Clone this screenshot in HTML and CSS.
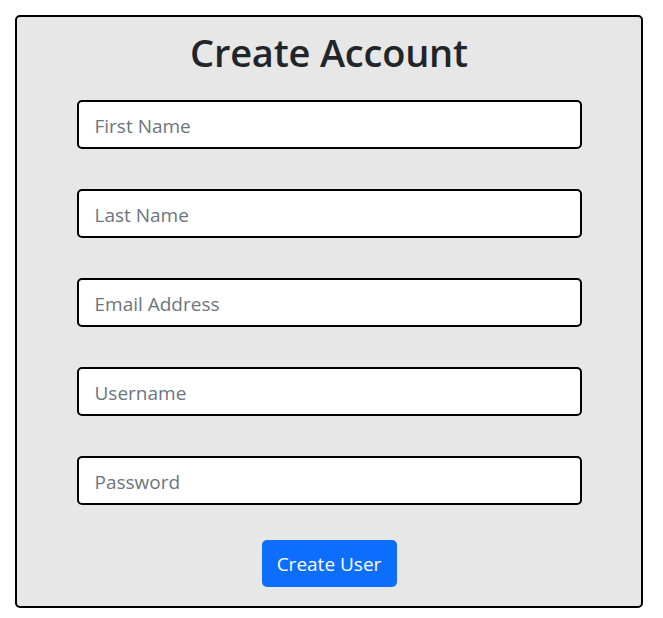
FILE: index.html
```html
<!DOCTYPE html>
<html lang="en">
<head>
<meta charset="utf-8">
<title>Create Account</title>
<link rel="stylesheet" href="styles.css">
</head>
<body>
<main class="card">
  <h1 class="title">Create Account</h1>
  <form class="form">
    <input class="field" type="text" placeholder="First Name">
    <input class="field" type="text" placeholder="Last Name">
    <input class="field" type="email" placeholder="Email Address">
    <input class="field" type="text" placeholder="Username">
    <input class="field" type="password" placeholder="Password">
    <button class="btn" type="button">Create User</button>
  </form>
</main>
</body>
</html>
```

FILE: styles.css
```css
* { box-sizing: border-box; }
html, body { margin: 0; background: #fff; }
body {
  padding: 15px 19px 0 15px;
  font-family: "Open Sans", "Noto Sans", "Liberation Sans", sans-serif;
  color: #212529;
}
.card {
  width: 628px;
  height: 593px;
  background: #e7e7e7;
  border: 2px solid #000;
  border-radius: 5px;
  display: flex;
  flex-direction: column;
  align-items: center;
  padding-top: 8px;
}
.title {
  margin: 0;
  font-size: 38px;
  font-weight: 600;
  line-height: 54px;
  letter-spacing: -0.2px;
  color: #212529;
}
.form {
  display: flex;
  flex-direction: column;
  align-items: center;
  gap: 40px;
  margin-top: 21px;
}
.field {
  width: 505px;
  height: 49px;
  border: 2px solid #000;
  border-radius: 5px;
  background: #fff;
  padding: 2px 16px 0;
  font-family: inherit;
  font-size: 19px;
  color: #212529;
  outline: none;
}
.field::placeholder { color: #6c757d; }
.btn {
  margin-top: -5px;
  width: 135px;
  height: 47px;
  border: none;
  border-radius: 5px;
  background: #0d6efd;
  color: #fff;
  font-family: inherit;
  font-size: 19px;
  padding: 1px 0 0;
}
```
